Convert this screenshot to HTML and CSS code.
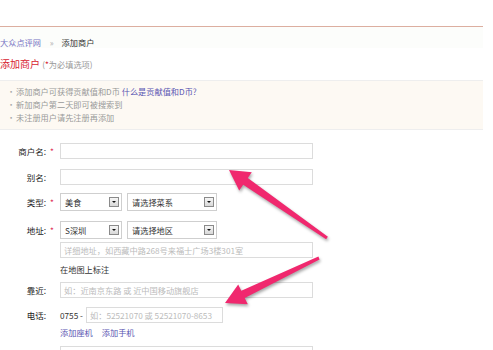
FILE: index.html
```html
<!DOCTYPE html>
<html lang="zh-CN">

<head>
    <meta charset="UTF-8">
    <meta name="viewport" content="width=device-width, initial-scale=1.0">
    <title>添加商户</title>
    <link rel="stylesheet" href="styles.css">
</head>

<body>
    <div class="page">
        <!-- 顶部线 -->
        <div class="topbar"></div>

        <div class="crumbs">
            <a href="#">大众点评网</a>
            <span class="sep">»</span>
            <span class="current">添加商户</span>
        </div>

        <h1 class="title">添加商户 <small>(<em>*</em>为必填选项)</small></h1>

        <!-- 提示 -->
        <ul class="tips">
            <li>添加商户可获得贡献值和D币 <a href="#">什么是贡献值和D币?</a></li>
            <li>新加商户第二天即可被搜索到</li>
            <li>未注册用户请先注册再添加</li>
        </ul>

        <!-- 表单 -->
        <div class="form">
            <div class="row row-name">
                <span class="label">商户名:</span><span class="star">*</span>
                <div class="input"></div>
            </div>
            <div class="row row-alias">
                <span class="label">别名:</span><span class="star"></span>
                <div class="input"></div>
            </div>
            <div class="row row-type">
                <span class="label">类型:</span><span class="star">*</span>
                <div class="select small"><span>美食</span><i class="btn"></i></div>
                <div class="select large"><span>请选择菜系</span><i class="btn"></i></div>
            </div>
            <div class="row row-addr">
                <span class="label">地址:</span><span class="star">*</span>
                <div class="field">
                    <div class="selects">
                        <div class="select small"><span>S深圳</span><i class="btn"></i></div>
                        <div class="select large"><span>请选择地区</span><i class="btn"></i></div>
                    </div>
                    <div class="input hint">详细地址，如西藏中路268号来福士广场3楼301室</div>
                    <div class="note">在地图上标注</div>
                </div>
            </div>
            <div class="row row-near">
                <span class="label">靠近:</span><span class="star"></span>
                <div class="input hint">如：近南京东路 或 近中国移动旗舰店</div>
            </div>
            <div class="row row-phone">
                <span class="label">电话:</span><span class="star"></span>
                <div class="field">
                    <div class="phone">
                        <span class="code">0755 -</span>
                        <div class="input hint short">如：52521070 或 52521070-8653</div>
                    </div>
                    <div class="links"><a href="#">添加座机</a><a href="#">添加手机</a></div>
                </div>
            </div>
            <div class="row row-next">
                <span class="label"></span><span class="star"></span>
                <div class="input"></div>
            </div>
        </div>

        <!-- 箭头 -->
        <svg class="arrows" width="493" height="350" viewBox="0 0 493 350">
            <polygon points="229,170 251.8,172.3 247.8,178.1 327.9,236.8 326.1,239.2 243.2,184.7 239.2,190.5" />
            <polygon points="225,303 247.8,304.3 244.7,298 319.6,259.4 318.4,256.6 241.3,290.8 238.2,284.5" />
        </svg>
    </div>
</body>

</html>
```

FILE: styles.css
```css
/* 基础 */
body {
    margin: 0;
    padding: 0;
    background-color: #fff;
    color: #333;
    font-family: "Noto Sans CJK SC", "Liberation Sans", sans-serif;
    font-size: 8.2px;
    overflow: hidden;
}

a {
    color: #5a56b2;
    text-decoration: none;
}

.page {
    position: relative;
    width: 483px;
    height: 350px;
}

.topbar {
    height: 26px;
    border-bottom: 1px solid #dcaea0;
}

/* 面包屑 */
.crumbs {
    padding-top: 9px;
    line-height: 12px;
    background-color: #fcfdfb;
}

.crumbs a {
    color: #7673c4;
}

.crumbs .sep {
    color: #aaa;
    margin: 0 6px 0 7px;
}

.title {
    margin: 9px 0 0;
    line-height: 14px;
    font-size: 10px;
    font-weight: normal;
    color: #d8232f;
}

.title small {
    font-size: 8.2px;
    color: #999;
}

.title em {
    font-style: normal;
    color: #d8232f;
}

/* 提示 */
.tips {
    list-style: none;
    margin: 9px 0 0;
    padding: 4px 0 5px 16px;
    background-color: #fdf9f3;
    border-top: 1px solid #eee;
    border-bottom: 1px solid #eee;
    color: #999;
}

.tips li {
    position: relative;
    line-height: 13px;
}

.tips li::before {
    content: "•";
    position: absolute;
    left: -9px;
    color: #aaa;
}

/* 表单 */
.form {
    padding-top: 13px;
}

.row {
    display: flex;
    align-items: flex-start;
}

.label {
    width: 46px;
    text-align: right;
    line-height: 16px;
    font-size: 8.5px;
    color: #222;
}

.star {
    width: 14px;
    padding-left: 4px;
    box-sizing: border-box;
    color: #e0325a;
    line-height: 16px;
}

.input {
    width: 253px;
    height: 16px;
    box-sizing: border-box;
    border: 1px solid #dcdcdc;
    background-color: #fff;
}

.input.hint {
    padding-left: 3px;
    line-height: 14px;
    color: #bbb;
    white-space: nowrap;
    overflow: hidden;
}

.input.short {
    width: 137px;
}

.select {
    display: flex;
    align-items: center;
    justify-content: space-between;
    height: 18px;
    box-sizing: border-box;
    border: 1px solid #cfcfcf;
    padding: 0 2px 0 4px;
    margin-right: 5px;
    background-color: #fff;
}

.select.small {
    width: 62px;
}

.select.large {
    width: 90px;
}

.select .btn {
    position: relative;
    width: 10px;
    height: 10px;
    box-sizing: border-box;
    border: 1px solid #8a8a8a;
    background: linear-gradient(#f6f6f6, #d8d8d8);
}

.select .btn::after {
    content: "";
    position: absolute;
    left: 2px;
    top: 3px;
    border-left: 2px solid transparent;
    border-right: 2px solid transparent;
    border-top: 2px solid #111;
}

.row-type .label,
.row-type .star,
.row-addr .label,
.row-addr .star {
    line-height: 18px;
}

.row-alias {
    margin-top: 10px;
}

.row-type {
    margin-top: 8px;
}

.row-addr {
    margin-top: 10px;
}

.selects {
    display: flex;
}

.row-addr .input {
    margin-top: 3px;
}

.note {
    line-height: 12px;
    margin-top: 5px;
}

.row-near {
    margin-top: 7px;
}

.row-phone {
    margin-top: 9px;
}

.phone {
    display: flex;
    align-items: center;
}

.code {
    width: 26px;
    line-height: 16px;
}

.links {
    line-height: 12px;
    margin-top: 3px;
}

.links a {
    margin-right: 9px;
}

.row-next {
    margin-top: 8px;
}

/* 箭头 */
.arrows {
    position: absolute;
    left: 0;
    top: 0;
    pointer-events: none;
    filter: drop-shadow(1px 2px 1.5px rgba(0, 0, 0, 0.35));
}

.arrows polygon {
    fill: #f0286e;
}
```
